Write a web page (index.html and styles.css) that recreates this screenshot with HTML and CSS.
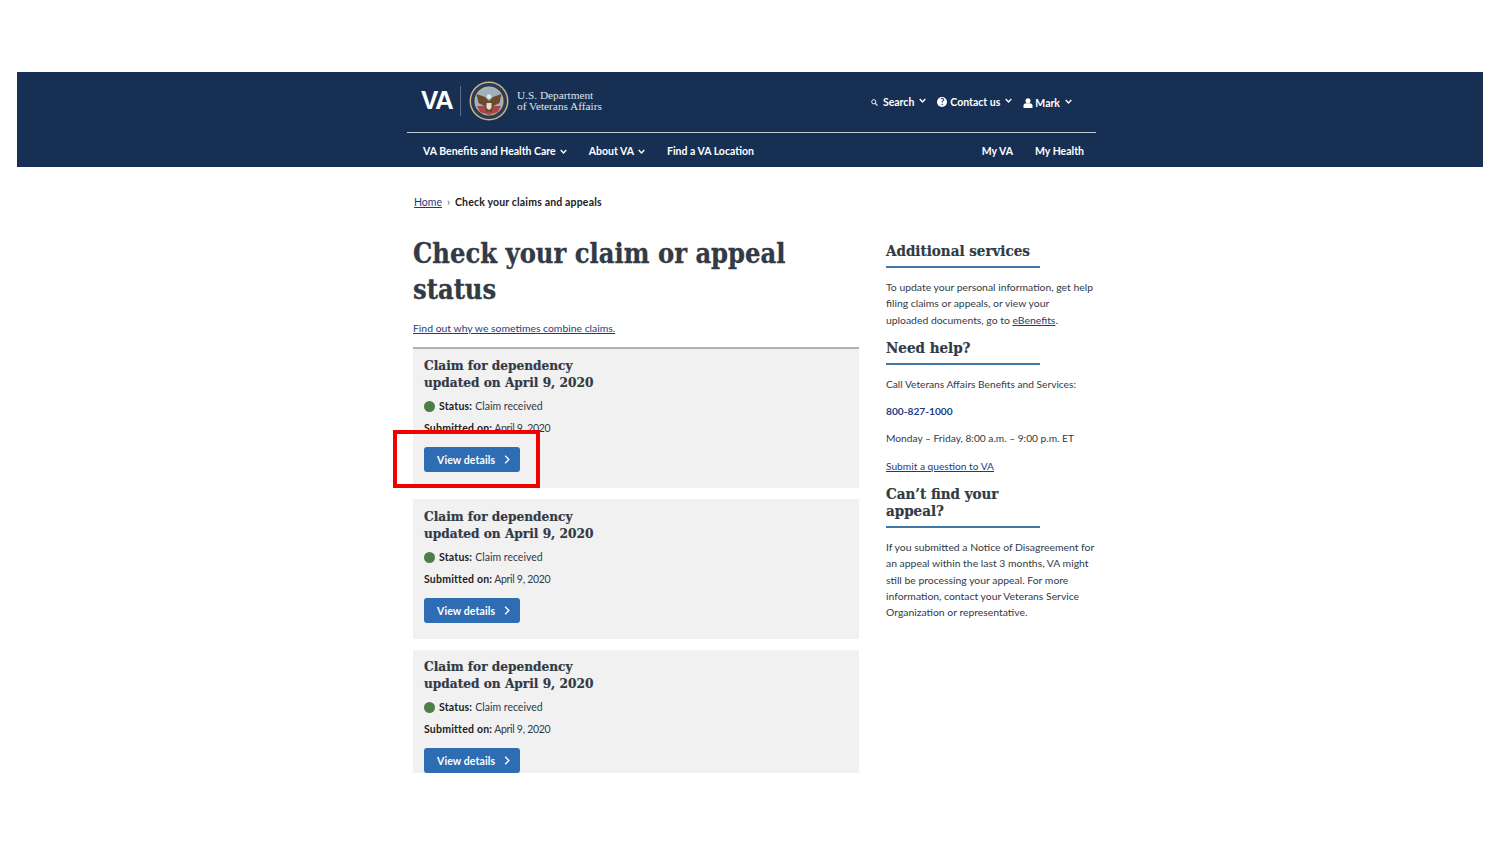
FILE: index.html
```html
<!DOCTYPE html>
<html lang="en">
<head>
<meta charset="utf-8">
<title>Check your claim or appeal status</title>
<link rel="stylesheet" href="styles.css">
</head>
<body>
<div class="slide">
  <header class="site-header">
    <div class="header-inner">
      <div class="top-row">
        <div class="brand">
          <span class="va-mark">VA</span>
          <span class="brand-rule"></span>
          <svg class="seal" viewBox="0 0 40 40" width="40" height="40" aria-hidden="true">
            <circle cx="20" cy="20" r="19.500" fill="#c9b77f"/>
            <circle cx="20" cy="20" r="18" fill="#2a3b5c"/>
            <circle cx="20" cy="20" r="14.500" fill="#c9b77f"/>
            <circle cx="20" cy="20" r="13.500" fill="#9fb0bf"/>
            <path d="M8 25h24l-3 6-9 3-9-3z" fill="#a8474a"/>
            <path d="M7.500 13l8.500 3 4 4 4-4 8.500-3-2 9-6 3-2 6h-5l-2-6-6-3z" fill="#6a4a30"/>
            <circle cx="20" cy="15.500" r="2.200" fill="#efe9d9"/>
            <path d="M17.500 22h5v5l-2.500 2-2.500-2z" fill="#e6dfd0"/>
          </svg>
          <span class="dept">U.S. Department<br>of Veterans Affairs</span>
        </div>
        <nav class="utility">
          <span class="util-item util-search"><svg class="ic-search" viewBox="0 0 10 10" width="7" height="7" aria-hidden="true"><circle cx="4" cy="4" r="3" fill="none" stroke="#fff" stroke-width="1.300"/><path d="M6.300 6.300L9.300 9.300" stroke="#fff" stroke-width="1.500"/></svg><span class="util-label">Search</span><svg class="chev" viewBox="0 0 10 6" width="7" height="5" aria-hidden="true"><path d="M1 1l4 4 4-4" fill="none" stroke="#fff" stroke-width="2"/></svg></span>
          <span class="util-item"><span class="ic-help">?</span><span class="util-label">Contact us</span><svg class="chev" viewBox="0 0 10 6" width="7" height="5" aria-hidden="true"><path d="M1 1l4 4 4-4" fill="none" stroke="#fff" stroke-width="2"/></svg></span>
          <span class="util-item util-user"><svg class="ic-user" viewBox="0 0 10 10" width="10" height="10" aria-hidden="true"><circle cx="5" cy="2.800" r="2.500" fill="#fff"/><path d="M0.500 10V7.500C0.500 6 2 5.300 3 5.300h4c1 0 2.500.7 2.500 2.200V10z" fill="#fff"/></svg><span class="util-label">Mark</span><svg class="chev" viewBox="0 0 10 6" width="7" height="5" aria-hidden="true"><path d="M1 1l4 4 4-4" fill="none" stroke="#fff" stroke-width="2"/></svg></span>
        </nav>
      </div>
      <nav class="main-nav">
        <div class="nav-left">
          <span class="nav-item">VA Benefits and Health Care<svg class="chev" viewBox="0 0 10 6" width="7" height="5" aria-hidden="true"><path d="M1 1l4 4 4-4" fill="none" stroke="#fff" stroke-width="2"/></svg></span>
          <span class="nav-item">About VA<svg class="chev" viewBox="0 0 10 6" width="7" height="5" aria-hidden="true"><path d="M1 1l4 4 4-4" fill="none" stroke="#fff" stroke-width="2"/></svg></span>
          <span class="nav-item">Find a VA Location</span>
        </div>
        <div class="nav-right">
          <span class="nav-item">My VA</span>
          <span class="nav-item">My Health</span>
        </div>
      </nav>
    </div>
  </header>

  <div class="content">
    <div class="breadcrumb"><a href="#">Home</a><span class="crumb-sep">›</span><strong>Check your claims and appeals</strong></div>
    <div class="columns">
      <main class="main-col">
        <h1>Check your claim or appeal status</h1>
        <a class="combine" href="#">Find out why we sometimes combine claims.</a>
        <div class="cards">
          <article class="card first">
            <h2>Claim for dependency<br>updated on April 9, 2020</h2>
            <p class="status"><span class="dot"></span><b>Status:</b> Claim received</p>
            <p class="submitted"><b>Submitted on:</b> April 9, 2020</p>
            <a class="btn" href="#">View details<svg viewBox="0 0 8 12" width="6" height="9" aria-hidden="true"><path d="M1.500 1l5 5-5 5" fill="none" stroke="#fff" stroke-width="1.800"/></svg></a>
          </article>
          <article class="card">
            <h2>Claim for dependency<br>updated on April 9, 2020</h2>
            <p class="status"><span class="dot"></span><b>Status:</b> Claim received</p>
            <p class="submitted"><b>Submitted on:</b> April 9, 2020</p>
            <a class="btn" href="#">View details<svg viewBox="0 0 8 12" width="6" height="9" aria-hidden="true"><path d="M1.500 1l5 5-5 5" fill="none" stroke="#fff" stroke-width="1.800"/></svg></a>
          </article>
          <article class="card">
            <h2>Claim for dependency<br>updated on April 9, 2020</h2>
            <p class="status"><span class="dot"></span><b>Status:</b> Claim received</p>
            <p class="submitted"><b>Submitted on:</b> April 9, 2020</p>
            <a class="btn" href="#">View details<svg viewBox="0 0 8 12" width="6" height="9" aria-hidden="true"><path d="M1.500 1l5 5-5 5" fill="none" stroke="#fff" stroke-width="1.800"/></svg></a>
          </article>
        </div>
      </main>
      <aside class="side-col">
        <h3>Additional services</h3>
        <p class="side-text">To update your personal information, get help<br>filing claims or appeals, or view your<br>uploaded documents, go to <a href="#">eBenefits</a>.</p>
        <h3>Need help?</h3>
        <p class="side-line">Call Veterans Affairs Benefits and Services:</p>
        <p class="side-line"><a class="phone" href="#">800-827-1000</a></p>
        <p class="side-line">Monday – Friday, 8:00 a.m. – 9:00 p.m. ET</p>
        <p class="side-line"><a href="#">Submit a question to VA</a></p>
        <h3>Can’t find your<br>appeal?</h3>
        <p class="side-text">If you submitted a Notice of Disagreement for<br>an appeal within the last 3 months, VA might<br>still be processing your appeal. For more<br>information, contact your Veterans Service<br>Organization or representative.</p>
      </aside>
    </div>
  </div>
</div>
<div class="highlight"></div>
</body>
</html>
```
FILE: styles.css
```css
* { box-sizing: border-box; }
html, body { margin: 0; padding: 0; background: #fff; }
body {
  position: relative;
  height: 844px;
  overflow: hidden;
  font-family: Lato, "Noto Sans", "Liberation Sans", sans-serif;
  color: #323a45;
}
.slide {
  margin: 72px 17px 0;
  height: 701px;
  overflow: hidden;
  background: #fff;
}
.site-header { background: #172f52; height: 95px; }
.header-inner { margin-left: 390px; width: 689px; }
.top-row {
  height: 61px;
  border-bottom: 1px solid #c5cad3;
  display: flex;
  align-items: center;
  justify-content: space-between;
  padding: 0 24px 0 14px;
}
.brand { display: flex; align-items: center; margin-top: -3px; }
.va-mark {
  font-family: "Liberation Sans", sans-serif;
  font-weight: 700;
  font-size: 26px;
  letter-spacing: -1.500px;
  color: #fff;
  width: 32px;
}
.brand-rule { width: 1px; height: 30px; background: #5b6f8c; margin: 0 8px 0 7px; }
.seal { display: block; }
.dept {
  margin-left: 8px;
  font-family: "Liberation Serif", serif;
  font-size: 11.300px;
  line-height: 11px;
  color: #dfe3ea;
}
.utility { display: flex; align-items: center; gap: 11px; }
.util-item, .nav-item {
  display: inline-flex;
  align-items: center;
  font-size: 10.500px;
  font-weight: 700;
  color: #fff;
  white-space: nowrap;
}
.util-label { margin-left: 3px; }
.util-search .util-label { margin-left: 5px; }
.util-user .util-label { margin-left: 2px; }
.util-item .chev { margin-left: 5px; margin-top: -3px; }
.util-user { padding-top: 1px; }
.ic-help {
  width: 10px; height: 10px;
  border-radius: 50%;
  background: #fff;
  color: #172f52;
  font-size: 9px;
  line-height: 10px;
  text-align: center;
  font-weight: 700;
}
.ic-user { display: block; }
.main-nav {
  display: flex;
  justify-content: space-between;
  align-items: center;
  height: 34px;
  padding: 2px 12px 0 16px;
}
.nav-left, .nav-right { display: flex; gap: 22px; }
.nav-item .chev { margin-left: 4px; }
.content { margin-left: 396px; width: 683px; }
.breadcrumb {
  margin: 28px 0 0 1px;
  height: 14px;
  font-size: 10.500px;
  line-height: 14px;
  color: #212121;
  display: flex;
}
.breadcrumb strong { font-weight: 700; letter-spacing: 0.170px; }
.crumb-sep { margin: 0 5px; color: #5b616b; }
a { color: #1d3c80; text-decoration: underline; }
.columns { display: flex; gap: 27px; margin-top: 22px; }
.main-col { width: 446px; }
.side-col { width: 210px; padding-top: 12px; }
h1 {
  margin: 5px 0 0;
  font-family: "DejaVu Serif", serif;
  font-stretch: condensed;
  font-weight: 700;
  font-size: 27px;
  line-height: 36px;
  color: #323a45;
  width: 400px;
  -webkit-text-stroke: 0.300px #323a45;
}
.combine { display: block; font-size: 10.400px; line-height: 14px; margin-top: 13px; }
.cards { margin-top: 12px; }
.card {
  background: #f1f1f1;
  height: 140px;
  padding: 9px 11px 0;
  margin-bottom: 11px;
}
.card.first { border-top: 2px solid #aeb0b5; padding-top: 8px; height: 141px; }
.card:last-child { padding-top: 8px; }
h2 {
  margin: 0;
  font-family: "DejaVu Serif", serif;
  font-stretch: condensed;
  font-weight: 700;
  font-size: 13.500px;
  line-height: 17px;
  color: #323a45;
  -webkit-text-stroke: 0.200px #323a45;
}
.status, .submitted { margin: 0; font-size: 10.500px; line-height: 14px; color: #323a45; }
.status { margin-top: 8px; display: flex; align-items: center; gap: 3px; }
.status b, .submitted b { color: #212121; letter-spacing: 0.200px; }
.dot { width: 11px; height: 11px; border-radius: 50%; background: #4a8046; margin-right: 1px; }
.submitted { margin-top: 8px; letter-spacing: -0.300px; }
.btn {
  margin-top: 12px;
  width: 96px;
  height: 25px;
  display: flex;
  align-items: center;
  justify-content: space-between;
  padding: 0 10px 0 13px;
  background: #2e6db4;
  border-radius: 3px;
  color: #fff;
  font-size: 10.500px;
  font-weight: 700;
  letter-spacing: 0.100px;
  text-decoration: none;
}
h3 {
  margin: 0;
  font-family: "DejaVu Serif", serif;
  font-stretch: condensed;
  font-weight: 700;
  font-size: 15px;
  line-height: 17px;
  color: #323a45;
  -webkit-text-stroke: 0.200px #323a45;
}
h3::after {
  content: "";
  display: block;
  width: 154px;
  height: 2px;
  background: #3f78a8;
  margin-top: 6px;
}
.side-text { margin: 11px 0 12px; font-size: 10.400px; line-height: 16.300px; white-space: nowrap; }
.side-line { margin: 0; font-size: 10.200px; line-height: 14px; padding-bottom: 13.300px; }
h3 + .side-line { margin-top: 12px; }
.phone { font-weight: 700; text-decoration: none; }
.side-line:last-of-type { padding-bottom: 11px; }
.highlight {
  position: absolute;
  left: 393px;
  top: 430px;
  width: 147px;
  height: 58px;
  border: 4px solid #f20000;
}
```
